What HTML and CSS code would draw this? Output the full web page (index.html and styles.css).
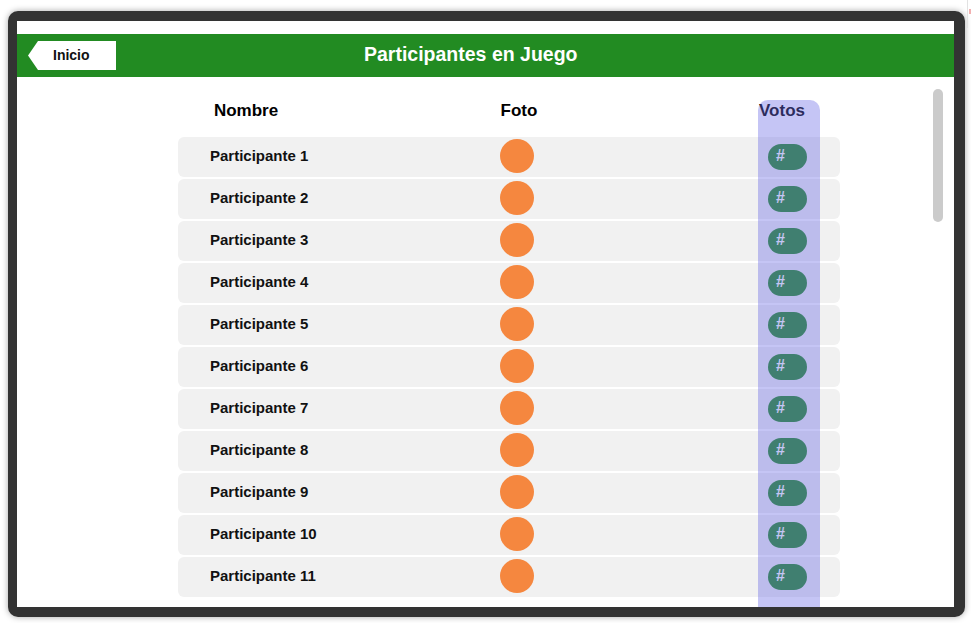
FILE: index.html
```html
<!DOCTYPE html>
<html lang="es">
<head>
<meta charset="utf-8">
<title>Participantes en Juego</title>
<link rel="stylesheet" href="styles.css">
</head>
<body>
<div class="edge-mark"><span class="edge-dot"></span></div>
<div class="device">
  <div class="screen">
    <header class="topbar">
      <button class="back-btn">Inicio</button>
      <h1 class="title">Participantes en Juego</h1>
    </header>
    <main class="content">
      <div class="table">
        <div class="thead">
          <div>Nombre</div>
          <div>Foto</div>
          <div>Votos</div>
        </div>
        <div class="rows">
          <div class="row"><span class="name">Participante 1</span><span class="photo"></span><span class="votes">#</span></div>
          <div class="row"><span class="name">Participante 2</span><span class="photo"></span><span class="votes">#</span></div>
          <div class="row"><span class="name">Participante 3</span><span class="photo"></span><span class="votes">#</span></div>
          <div class="row"><span class="name">Participante 4</span><span class="photo"></span><span class="votes">#</span></div>
          <div class="row"><span class="name">Participante 5</span><span class="photo"></span><span class="votes">#</span></div>
          <div class="row"><span class="name">Participante 6</span><span class="photo"></span><span class="votes">#</span></div>
          <div class="row"><span class="name">Participante 7</span><span class="photo"></span><span class="votes">#</span></div>
          <div class="row"><span class="name">Participante 8</span><span class="photo"></span><span class="votes">#</span></div>
          <div class="row"><span class="name">Participante 9</span><span class="photo"></span><span class="votes">#</span></div>
          <div class="row"><span class="name">Participante 10</span><span class="photo"></span><span class="votes">#</span></div>
          <div class="row"><span class="name">Participante 11</span><span class="photo"></span><span class="votes">#</span></div>
        </div>
        <div class="col-highlight"></div>
      </div>
      <div class="scroll-thumb"></div>
    </main>
  </div>
</div>
</body>
</html>
```

FILE: styles.css
```css
* { box-sizing: border-box; }

html, body {
  margin: 0;
  padding: 0;
  background: #ffffff;
  font-family: "Liberation Sans", Arial, sans-serif;
  width: 971px;
  height: 623px;
  overflow: hidden;
}

body { position: relative; }

.edge-mark {
  position: absolute;
  left: 967px;
  top: 0;
  width: 1px;
  height: 28px;
  background: #e2e2e2;
}

.edge-dot {
  position: absolute;
  left: 2px;
  top: 9px;
  width: 2px;
  height: 5px;
  background: #f2b0b0;
}

.device {
  margin: 11px 0 0 8px;
  width: 957px;
  height: 606px;
  border-style: solid;
  border-color: #333333;
  border-width: 10px 11px 10px 9px;
  border-radius: 10px;
  box-shadow: 0 0 6px rgba(0, 0, 0, 0.35);
  background: #333333;
}

.screen {
  width: 100%;
  height: 100%;
  background: #ffffff;
  padding-top: 13px;
  display: flex;
  flex-direction: column;
  overflow: hidden;
}

.topbar {
  height: 43px;
  flex: none;
  background: #228b22;
  display: flex;
  align-items: center;
  padding-left: 11px;
}

.back-btn {
  width: 88px;
  height: 29px;
  border: 0;
  margin: 0;
  background: #ffffff;
  clip-path: polygon(10px 0, 100% 0, 100% 100%, 10px 100%, 0 50%);
  font-family: "Liberation Sans", Arial, sans-serif;
  font-weight: bold;
  font-size: 14px;
  color: #111111;
  text-align: left;
  padding: 0 0 1px 25px;
}

.title {
  margin: 0 0 3px 248px;
  font-size: 19.5px;
  font-weight: bold;
  color: #ffffff;
}

.content {
  flex: 1;
  position: relative;
  overflow: hidden;
}

.table {
  position: relative;
  margin-left: 161px;
  width: 662px;
  padding-top: 18px;
}

.thead {
  display: grid;
  grid-template-columns: 136px 410px 116px;
  height: 30px;
  line-height: 32px;
  text-align: center;
  font-size: 17px;
  font-weight: bold;
  color: #000000;
  margin-bottom: 12px;
}

.rows {
  display: flex;
  flex-direction: column;
  gap: 2px;
}

.row {
  display: grid;
  grid-template-columns: 136px 410px 116px;
  align-items: center;
  height: 40px;
  background: #f1f1f1;
  border-radius: 6px;
}

.name {
  padding-left: 32px;
  padding-bottom: 3px;
  font-size: 15px;
  font-weight: bold;
  color: #111111;
  white-space: nowrap;
}

.photo {
  justify-self: center;
  margin-left: -4px;
  margin-bottom: 2px;
  width: 34px;
  height: 34px;
  border-radius: 50%;
  background: #f5873f;
}

.votes {
  justify-self: start;
  margin-left: 44px;
  width: 39px;
  height: 26px;
  border-radius: 13px;
  background: #228b22;
  color: #ffffff;
  font-size: 16px;
  font-weight: bold;
  line-height: 24px;
  padding-left: 8px;
}

.col-highlight {
  position: absolute;
  left: 580px;
  top: 23px;
  width: 62px;
  height: 620px;
  border-radius: 10px;
  background: rgba(110, 110, 230, 0.4);
}

.scroll-thumb {
  position: absolute;
  right: 11px;
  top: 12px;
  width: 10px;
  height: 133px;
  border-radius: 5px;
  background: #cbcbcb;
}
```
